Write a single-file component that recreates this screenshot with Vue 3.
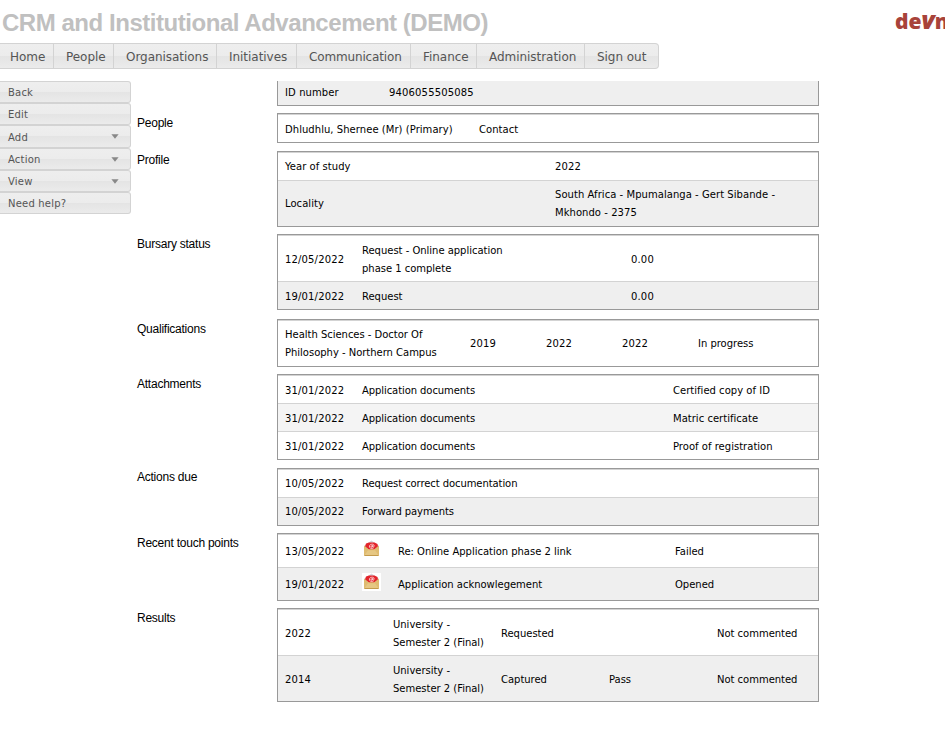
<script setup>
const menu = [
  { text: 'Home', cls: 'm-home' },
  { text: 'People', cls: 'm-people' },
  { text: 'Organisations', cls: 'm-org' },
  { text: 'Initiatives', cls: 'm-init' },
  { text: 'Communication', cls: 'm-comm' },
  { text: 'Finance', cls: 'm-fin' },
  { text: 'Administration', cls: 'm-admin' },
  { text: 'Sign out', cls: 'm-out' },
]

const side = [
  { text: 'Back' },
  { text: 'Edit' },
  { text: 'Add', more: true, tall: true },
  { text: 'Action', more: true },
  { text: 'View', more: true },
  { text: 'Need help?' },
]

const sections = [
  { label: '', kind: 'identity', rows: [['ID number', '9406055505085']] },
  { label: 'People', kind: 'people', rows: [['Dhludhlu, Shernee (Mr) (Primary)', 'Contact']] },
  {
    label: 'Profile', kind: 'profile',
    rows: [['Year of study', '2022'], ['Locality', 'South Africa - Mpumalanga - Gert Sibande -\nMkhondo - 2375']],
  },
  {
    label: 'Bursary status', kind: 'bursary',
    rows: [['12/05/2022', 'Request - Online application\nphase 1 complete', '0.00'], ['19/01/2022', 'Request', '0.00']],
  },
  {
    label: 'Qualifications', kind: 'qualifications',
    rows: [['Health Sciences - Doctor Of\nPhilosophy - Northern Campus', '2019', '2022', '2022', 'In progress']],
  },
  {
    label: 'Attachments', kind: 'attachments',
    rows: [
      ['31/01/2022', 'Application documents', 'Certified copy of ID'],
      ['31/01/2022', 'Application documents', 'Matric certificate'],
      ['31/01/2022', 'Application documents', 'Proof of registration'],
    ],
  },
  {
    label: 'Actions due', kind: 'actions',
    rows: [['10/05/2022', 'Request correct documentation'], ['10/05/2022', 'Forward payments']],
  },
  {
    label: 'Recent touch points', kind: 'touch',
    rows: [['13/05/2022', '@mail', 'Re: Online Application phase 2 link', 'Failed'], ['19/01/2022', '@mail', 'Application acknowlegement', 'Opened']],
  },
  {
    label: 'Results', kind: 'results',
    rows: [
      ['2022', 'University -\nSemester 2 (Final)', 'Requested', '', 'Not commented'],
      ['2014', 'University -\nSemester 2 (Final)', 'Captured', 'Pass', 'Not commented'],
    ],
  },
]

const isNumeric = (text) => /^[\d/.]+$/.test(text)
</script>

<template>
  <div class="page">
    <header class="top">
      <h1>CRM and Institutional Advancement (DEMO)</h1>
      <div class="logo">de<i>v</i>n</div>
    </header>
    <nav class="menu">
      <a v-for="m in menu" :key="m.text" :class="m.cls"><span>{{ m.text }}</span></a>
    </nav>
    <div class="body">
      <aside class="side">
        <a v-for="s in side" :key="s.text" :class="{ tall: s.tall }">
          <span>{{ s.text }}</span>
          <svg v-if="s.more" width="8" height="5" viewBox="0 0 8 5"><path d="M0.4 0.3H7.6L4 4.7Z" fill="#888" /></svg>
        </a>
      </aside>
      <main class="sections">
        <section v-for="s in sections" :key="s.kind" :class="s.kind">
          <h2>{{ s.label }}</h2>
          <div class="table">
            <div v-for="(row, r) in s.rows" :key="r" class="row">
              <div v-for="(cell, c) in row" :key="c" class="cell" :class="{ numeric: isNumeric(cell), icon: cell === '@mail' }">
                <svg v-if="cell === '@mail'" class="mail" width="19" height="18" viewBox="0 0 19 18">
                  <rect width="19" height="18" fill="#fff" />
                  <path d="M2 6L9.5 0.6L17 6V9H2Z" fill="#d3d3da" />
                  <path d="M4 3.6L7 2.6H12.5L15.5 4L16 6.5L12 10H7L3 6.5Z" fill="#e3242b" />
                  <path d="M11.6 7.9C9.6 9.1 7 8.2 7.4 6C7.8 4 11.9 3.4 12.1 5.6C12.2 7.2 10.6 7.6 10.6 6.4L10.8 5M10.6 5.9C9.3 4.8 8.3 7.2 9.4 7.2C10.1 7.2 10.5 6.5 10.6 5.9" fill="none" stroke="#ffe3e3" stroke-width=".8" />
                  <path d="M2 5.6L6.5 9.2H12.5L17 5.6V14.7Q17 16 15.7 16H3.3Q2 16 2 14.7Z" fill="#dfbb70" />
                  <path d="M2.4 15.6L6 10.2H13L16.6 15.6" fill="#e6c783" />
                  <path d="M2.5 15.5H16.5" stroke="#c39a4c" />
                </svg>
                <template v-else>{{ cell }}</template>
              </div>
            </div>
          </div>
        </section>
      </main>
    </div>
  </div>
</template>

<style>
body { margin: 0; background: #fff; overflow: hidden; }
</style>

<style scoped>
.page { width: 945px; height: 730px; overflow: hidden; font-family: "DejaVu Sans", Verdana, sans-serif; color: #000; }
.top { height: 43px; display: flex; justify-content: space-between; overflow: hidden; }
h1 { margin: 0; padding-left: 2px; font: bold 24px/46px "Liberation Sans", Arial, sans-serif; letter-spacing: -0.46px; color: #c0c0c0; white-space: nowrap; }
.logo { width: 50px; overflow: hidden; white-space: nowrap; font: 800 21px/43px "Open Sans", sans-serif; letter-spacing: -0.1px; color: #a8433a; }
.logo i { font-size: 25px; line-height: 1; }
.menu { box-sizing: border-box; width: 659px; height: 26px; display: flex; border: 1px solid #d3d3d3; border-left: 0; border-radius: 0 4px 4px 0; background: linear-gradient(#eee 0, #ececec 50%, #e4e4e4 50%, #ebebeb 100%); font-size: 12px; line-height: 26px; letter-spacing: -0.04px; color: #555; }
.menu a { box-sizing: border-box; flex: none; height: 24px; border-right: 1px solid #d3d3d3; padding-left: 12px; white-space: nowrap; }
.menu a:last-child { border-right: 0; }
.menu .m-home { width: 54px; padding-left: 10px; }
.menu .m-people { width: 60px; }
.menu .m-org { width: 103px; }
.menu .m-init { width: 80px; }
.menu .m-comm { width: 114px; letter-spacing: -0.15px; }
.menu .m-fin { width: 66px; }
.menu .m-admin { width: 108px; }
.menu .m-out { width: 73px; }
.body { display: flex; padding-top: 12px; }
.side { width: 137px; display: flex; flex-direction: column; }
.side a { box-sizing: border-box; width: 131px; height: 22px; display: flex; align-items: center; justify-content: space-between; padding: 0 11px 0 8px; border: 1px solid #d3d3d3; border-left: 0; border-radius: 0 3px 3px 0; background: linear-gradient(#eee 0, #ececec 50%, #e4e4e4 50%, #ebebeb 100%); font-size: 10px; line-height: 20px; letter-spacing: 0.2px; color: #555; }
.side span { padding-top: 2px; }
.side .tall { height: 23px; }
.sections { width: 682px; }
section { display: flex; margin-bottom: 7px; }
.people, .attachments { margin-bottom: 8px; }
.bursary { margin-bottom: 9px; }
h2 { margin: 0; width: 140px; font: 12px/20px "Liberation Sans", Arial, sans-serif; letter-spacing: -0.24px; }
.profile h2, .actions h2 { line-height: 18px; }
.table { box-sizing: border-box; width: 542px; border: 1px solid #999; font-size: 10px; line-height: 18px; letter-spacing: -0.02px; }
.row { display: grid; box-sizing: border-box; height: 28px; border-top: 1px solid #d3d3d3; align-items: center; padding-left: 7px; }
.row:nth-child(even), .identity .row { background: #efefef; }
.attachments .row:nth-child(even) { background: #f4f4f4; }
.cell { white-space: pre; }
.cell.numeric { letter-spacing: 0.16px; }
.identity .table { border-top: 0; letter-spacing: 0.1px; }
.identity .row { height: 24px; border-top: 0; grid-template-columns: 104px 1fr; }
.people .row { grid-template-columns: 194px 1fr; }
.people .cell, .bursary .cell, .attachments .cell { padding-top: 2px; }
.people .cell { letter-spacing: 0.05px; }
.profile .table { letter-spacing: 0.05px; }
.profile .row { grid-template-columns: 270px 1fr; }
.profile .row:last-child, .bursary .row:first-child, .qualifications .row, .results .row { height: 46px; }
.results .row:first-child { height: 46px; }
.bursary .row { grid-template-columns: 77px 269px 1fr; }
.qualifications .row { grid-template-columns: 185px 76px 76px 76px 1fr; }
.attachments .row { grid-template-columns: 77px 311px 1fr; }
.attachments .cell, .actions .cell:not(.numeric) { letter-spacing: -0.08px; }
.attachments .cell:last-child { letter-spacing: 0.02px; }
.attachments .cell.numeric { letter-spacing: 0.16px; }
.actions .row { grid-template-columns: 77px 1fr; }
.touch .row { height: 33px; grid-template-columns: 77px 36px 277px 1fr; }
.touch .cell:not(.icon), .results .cell { padding-top: 1px; }
.results .row { grid-template-columns: 108px 108px 108px 108px 1fr; }
.results .cell { padding-top: 2px; }
.mail { display: block; margin-bottom: 4px; }
</style>
